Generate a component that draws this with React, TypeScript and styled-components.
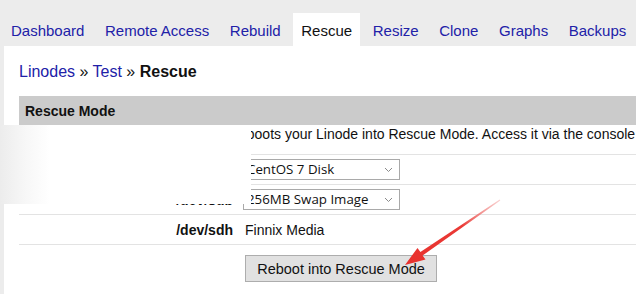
import styled, {createGlobalStyle} from "styled-components";

const GlobalStyle = createGlobalStyle`
  html, body {
    margin: 0;
    padding: 0;
    background: #ececec;
    overflow: hidden;
  }
  body {
    font-family: "Liberation Sans", Arial, sans-serif;
    color: #111;
  }
`

const Page = styled.div`
  position: relative;
  width: 636px;
  height: 294px;
  overflow: hidden;
`

const TabBar = styled.div`
  display: flex;
  gap: 4.6px;
  padding: 13px 0 0 3px;
  height: 33px;
  white-space: nowrap;
`

const Tab = styled.div<{ $active?: boolean }>`
  box-sizing: border-box;
  height: 33px;
  padding: 4px 8px 0;
  line-height: 28px;
  font-size: 15px;
  color: ${p => p.$active ? "#111" : "#2121a8"};
  background: ${p => p.$active ? "#fff" : "transparent"};
`

const Panel = styled.div`
  margin-left: 4px;
  background: #fff;
  padding: 17px 0 0 15px;
  height: 248px;
  box-sizing: border-box;
  width: 800px;
`

const Crumbs = styled.div`
  font-size: 16px;
  line-height: 18px;
  color: #111;

  a {
    color: #2121a8;
    text-decoration: none;
  }

  b {
    font-weight: bold;
  }
`

const Section = styled.div`
  margin-top: 15px;
`

const SectionHead = styled.div`
  background: #cbcbcb;
  height: 29px;
  line-height: 31px;
  padding-left: 6px;
  font-size: 14px;
  font-weight: bold;
`

const Description = styled.div`
  font-size: 14px;
  line-height: 16px;
  padding: 1px 0 12px 185px;
  border-bottom: 1px solid #e3e3e3;
  white-space: nowrap;
`

const Row = styled.div`
  display: grid;
  grid-template-columns: 219px 1fr;
  align-items: center;
  min-height: 29px;
  border-bottom: 1px solid #e3e3e3;
  font-size: 14px;
`

const Label = styled.div`
  text-align: right;
  padding-right: 5px;
  font-weight: bold;
`

const Value = styled.div`
  padding-left: 5px;
  display: flex;
  align-items: center;
`

const PlainValue = styled.span`
  padding-left: 2px;
`

const SelectBox = styled.div`
  position: relative;
  box-sizing: border-box;
  width: 157px;
  height: 21px;
  border: 1px solid #a9a9a9;
  background: #fff;
  font-family: "Open Sans", "DejaVu Sans", sans-serif;
  font-size: 13.3px;
  line-height: 18px;
  padding-left: 3px;
  color: #111;

  svg {
    position: absolute;
    right: 6px;
    top: 7px;
  }
`

const ButtonRow = styled.div`
  padding: 10px 0 0 226px;
`

const Button = styled.button`
  box-sizing: border-box;
  height: 27px;
  width: 192px;
  border: 1px solid #adadad;
  background: #e1e1e1;
  font-family: "Liberation Sans", Arial, sans-serif;
  font-size: 14.5px;
  color: #111;
  padding: 0;
`

// the blurred-out patch that hides the left side of the rows
const Smudge = styled.div`
  position: absolute;
  left: 0;
  top: 125px;
  width: 251px;
  height: 79px;
  background: linear-gradient(to right, #ececec 0, #f7f7f7 25px, #fff 50px);
`

const Arrow = styled.svg`
  position: absolute;
  left: 0;
  top: 0;
  pointer-events: none;
`

const tabs = ["Dashboard", "Remote Access", "Rebuild", "Rescue", "Resize", "Clone", "Graphs", "Backups"];

const Chevron = () => (
    <svg width="9" height="6" viewBox="0 0 9 6">
        <path d="M1 1 L4.5 4.5 L8 1" fill="none" stroke="#8a8a8a" strokeWidth="1"/>
    </svg>
)

const App = () => {
    return (
        <Page>
            <GlobalStyle/>
            <TabBar>
                {tabs.map(t => <Tab key={t} $active={t === "Rescue"}>{t}</Tab>)}
            </TabBar>
            <Panel>
                <Crumbs>
                    <a href="#">Linodes</a> » <a href="#">Test</a> » <b>Rescue</b>
                </Crumbs>
                <Section>
                    <SectionHead>Rescue Mode</SectionHead>
                    <Description>
                        This reboots your Linode into Rescue Mode. Access it via the console
                    </Description>
                    <Row>
                        <Label>/dev/sda</Label>
                        <Value>
                            <SelectBox>CentOS 7 Disk<Chevron/></SelectBox>
                        </Value>
                    </Row>
                    <Row>
                        <Label>/dev/sdb</Label>
                        <Value>
                            <SelectBox>256MB Swap Image<Chevron/></SelectBox>
                        </Value>
                    </Row>
                    <Row>
                        <Label>/dev/sdh</Label>
                        <Value><PlainValue>Finnix Media</PlainValue></Value>
                    </Row>
                    <ButtonRow>
                        <Button>Reboot into Rescue Mode</Button>
                    </ButtonRow>
                </Section>
            </Panel>
            <Smudge/>
            <Arrow width="636" height="294" viewBox="0 0 636 294">
                <defs>
                    <linearGradient id="arrowFade" x1="405" y1="265" x2="500" y2="200" gradientUnits="userSpaceOnUse">
                        <stop offset="0" stopColor="#e8312d"/>
                        <stop offset="0.6" stopColor="#ea3a36"/>
                        <stop offset="1" stopColor="#f08a88" stopOpacity="0.4"/>
                    </linearGradient>
                </defs>
                <polygon
                    points="405,265 425.5,259.5 422.6,255.4 500.3,200.4 499.7,199.6 420.4,252 417.5,247.9"
                    fill="url(#arrowFade)"
                />
            </Arrow>
        </Page>
    )
}

export default App;
